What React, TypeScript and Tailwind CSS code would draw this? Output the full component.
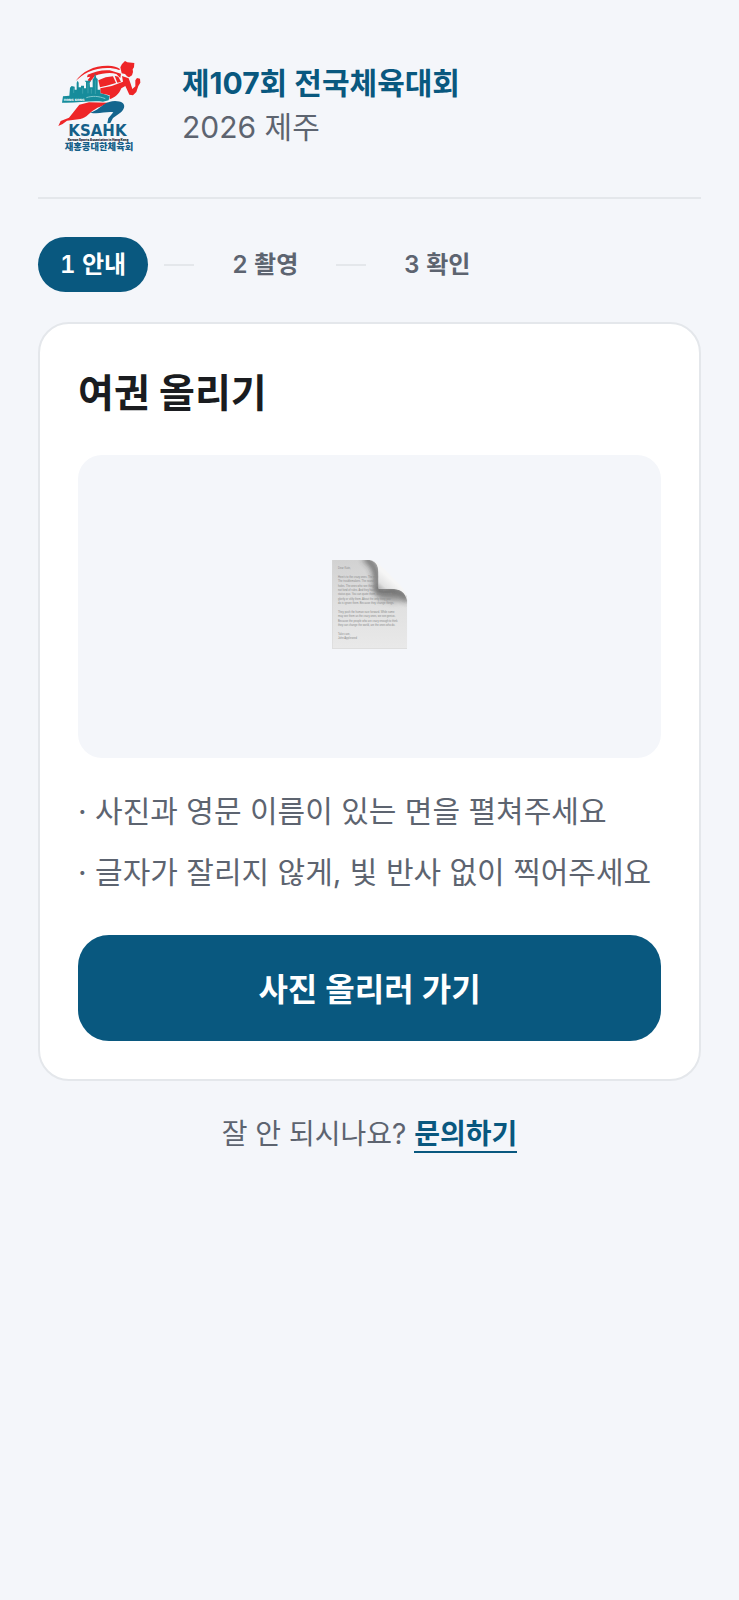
const steps = ['1 안내', '2 촬영', '3 확인'];

const tips = [
  '사진과 영문 이름이 있는 면을 펼쳐주세요',
  '글자가 잘리지 않게, 빛 반사 없이 찍어주세요',
];

const letter = [
  { y: 56, text: 'Dear Kate,' },
  { y: 83, text: "Here's to the crazy ones. The misfits." },
  { y: 96, text: 'The troublemakers. The round pegs' },
  { y: 110, text: 'holes. The ones who see things differently' },
  { y: 123, text: 'not fond of rules. And they have no respect' },
  { y: 136, text: 'status quo. You can quote them, disagree with' },
  { y: 150, text: 'glorify or vilify them. About the only thing you' },
  { y: 163, text: 'do is ignore them. Because they change things.' },
  { y: 189, text: 'They push the human race forward. While some' },
  { y: 202, text: 'may see them as the crazy ones, we see genius.' },
  { y: 215, text: 'Because the people who are crazy enough to think' },
  { y: 228, text: 'they can change the world, are the ones who do.' },
  { y: 254, text: 'Take care,' },
  { y: 267, text: 'John Appleseed' },
];

function Logo() {
  return (
    <svg
      className="h-[120px] w-[120px] shrink-0"
      viewBox="-21 -15 360 360"
      role="img"
      aria-label="KSAHK 재홍콩대한체육회"
    >
      <g fill="#ee2527">
        <path d="M92 93 C112 64 148 46 190 47 C205 47 217 51 226 58 L222 60 C196 50 160 53 130 66 C114 74 102 84 92 93Z" />
        <path d="M128 74 C148 65 172 59 194 61 L228 71 L226 84 L214 72 C196 66 172 70 150 77 L134 97 L128 90 L136 80 L126 82Z" />
        <path d="M240 33 L247 37 L268 39 L267 52 L263 58 L264 66 L261 76 L252 82 L246 79 L240 72 L230 70 L226 52 L231 42Z" />
        <path d="M160 91 L182 82 L204 79 L213 99 L190 106 L165 112Z" />
        <path d="M209 77 L220 80 L228 96 L217 98Z" />
        <path d="M231 78 L251 85 L257 101 L262 117 L271 109 L271 91 L276 84 L285 86 L286 98 L280 108 L274 126 L264 136 L253 134 L241 108 L229 115 C222 132 210 143 194 148 L194 136 L166 130 L166 115 L200 108 L234 95Z" />
        <path d="M40 228 L47 213 L72 203 L103 164 L132 157 L190 158 C174 168 160 170 148 179 C130 190 128 201 106 207 L66 212 L53 222Z" />
      </g>
      <path
        fill="#14658e"
        d="M136 188 C150 184 163 173 176 164 C193 151 220 150 233 159 C242 167 237 178 228 187 L204 204 L196 219 L187 220 L190 205 L205 187 C184 184 162 193 136 188Z"
      />
      <path
        fill="#168c9b"
        d="M51 158 L54 139 L73 137 L75 113 L80 108 L89 110 L89 119 L95 119 L95 98 L98 92 L101 98 L101 112 L108 112 L108 107 L117 107 L117 115 L123 115 L123 97 L119 92 L138 92 L134 99 L135 112 L143 112 L143 87 L147 84 L150 69 L154 84 L158 87 L158 119 L166 119 L166 130 L178 133 L194 138 L191 151 L174 155 C134 151 93 160 51 158Z"
      />
      <path d="M86 129 V115 M113 131 V115 M129 130 V98 M139 131 V116 M151 132 V91" stroke="#4fabb5" strokeWidth="2" />
      <path d="M124 143 C142 137 161 138 181 146" fill="none" stroke="#7fc7cc" strokeWidth="3" />
      <text x="56" y="153" fontSize="9" className="fill-white font-['DejaVu_Sans',sans-serif] font-bold">
        HONG KONG
      </text>
      <text x="70" y="259" fontSize="45" className="fill-[#155f88] font-['DejaVu_Sans',sans-serif] font-bold">
        KSAHK
      </text>
      <text x="68" y="274" fontSize="9" className="fill-[#17202a] font-['Inter',sans-serif] font-black">
        Korean Sports Association in Hong Kong
      </text>
      <text x="59" y="301" fontSize="28" className="fill-[#155f88] font-['Noto_Sans_CJK_KR',sans-serif] font-black">
        재홍콩대한체육회
      </text>
    </svg>
  );
}

function PageIcon() {
  return (
    <svg className="h-[110px] w-[100px]" viewBox="0 0 300 330" aria-hidden="true">
      <defs>
        <linearGradient id="paper" x1="0" y1="0" x2="0" y2="1">
          <stop offset="0" stopColor="#d2d2d2" />
          <stop offset="0.5" stopColor="#e0e0e0" />
          <stop offset="1" stopColor="#e9e9e9" />
        </linearGradient>
        <linearGradient id="curl" x1="174" y1="118" x2="206" y2="82" gradientUnits="userSpaceOnUse">
          <stop offset="0" stopColor="#a8a8a8" />
          <stop offset="0.4" stopColor="#e2e2e2" />
          <stop offset="1" stopColor="#f6f6f6" />
        </linearGradient>
        <filter id="soft" x="-50%" y="-50%" width="200%" height="200%">
          <feGaussianBlur stdDeviation="9" />
        </filter>
        <clipPath id="sheet">
          <path d="M36 30 H148 C168 32 176 45 176 66 V116 H219 C246 117 262 128 262 154 V297 H36Z" />
        </clipPath>
      </defs>
      <g clipPath="url(#sheet)">
        <rect x="36" y="30" width="226" height="267" fill="url(#paper)" />
        <path
          d="M134 24 C158 36 166 52 170 76 V122 H222 C246 124 258 138 264 152"
          fill="none"
          stroke="#353535"
          strokeWidth="15"
          opacity="0.85"
          filter="url(#soft)"
        />
        <path d="M176 118 H226 L262 150 L220 156 L172 146Z" fill="#555" opacity="0.5" filter="url(#soft)" />
        <g className="fill-[#8c8c8c] font-['Liberation_Sans',sans-serif]" fontSize="8">
          {letter.map((line) => (
            <text key={line.y} x="54" y={line.y}>
              {line.text}
            </text>
          ))}
        </g>
        <path d="M37 30 V296 H261" fill="none" stroke="#d6d6d6" strokeWidth="2" />
      </g>
      <path
        d="M148 30 C166 32 178 44 192 56 L240 105 C253 118 261 132 262 154 C256 126 240 116 212 116 H175 V68 C175 46 168 34 148 30Z"
        fill="url(#curl)"
      />
    </svg>
  );
}

export default function App() {
  return (
    <div className="min-h-screen bg-[#f4f6fa] px-[38px] pt-[45px] pb-10 font-['Inter','Noto_Sans_CJK_KR',sans-serif] text-[30px] text-[#5d6470]">
      <header className="flex items-center gap-6 border-b-2 border-[#e4e7eb] pb-8">
        <Logo />
        <div className="leading-[44px]">
          <h1 className="font-bold text-[#09587f]">제107회 전국체육대회</h1>
          <p>2026 제주</p>
        </div>
      </header>

      <ol className="mt-[38px] flex items-center gap-4 text-2xl leading-[55px] font-semibold tabular-nums">
        {steps.map((step, i) => (
          <li key={step} className="flex items-center gap-4 leading-[55px]">
            {i > 0 && <span className="h-0.5 w-[30px] bg-[#e4e7eb]" />}
            <span
              aria-current={i === 0 ? 'step' : undefined}
              className={i === 0 ? 'rounded-full bg-[#09587f] px-[22px] text-white' : 'px-[22px]'}
            >
              {step}
            </span>
          </li>
        ))}
      </ol>

      <main className="mt-[30px] rounded-[31px] border-2 border-[#e4e7eb] bg-white p-[38px]">
        <h2 className="text-[39px] leading-[62px] font-bold text-[#1a1c20]">여권 올리기</h2>
        <div className="mt-[31px] flex h-[303px] items-center justify-center rounded-3xl bg-[#f4f6fa] pb-1">
          <PageIcon />
        </div>
        <ul className="mt-[30px] flex flex-col gap-[15px] leading-[46px]">
          {tips.map((tip) => (
            <li key={tip}>· {tip}</li>
          ))}
        </ul>
        <button
          type="button"
          className="mt-10 h-[106px] w-full rounded-[31px] bg-[#09587f] pt-1 text-[32px] font-semibold text-white"
        >
          사진 올리러 가기
        </button>
      </main>

      <p className="mt-[30px] text-center text-[28px] leading-[46px]">
        잘 안 되시나요?{' '}
        <a href="#contact" className="border-b-2 border-[#09587f] font-bold text-[#09587f]">
          문의하기
        </a>
      </p>
    </div>
  );
}
